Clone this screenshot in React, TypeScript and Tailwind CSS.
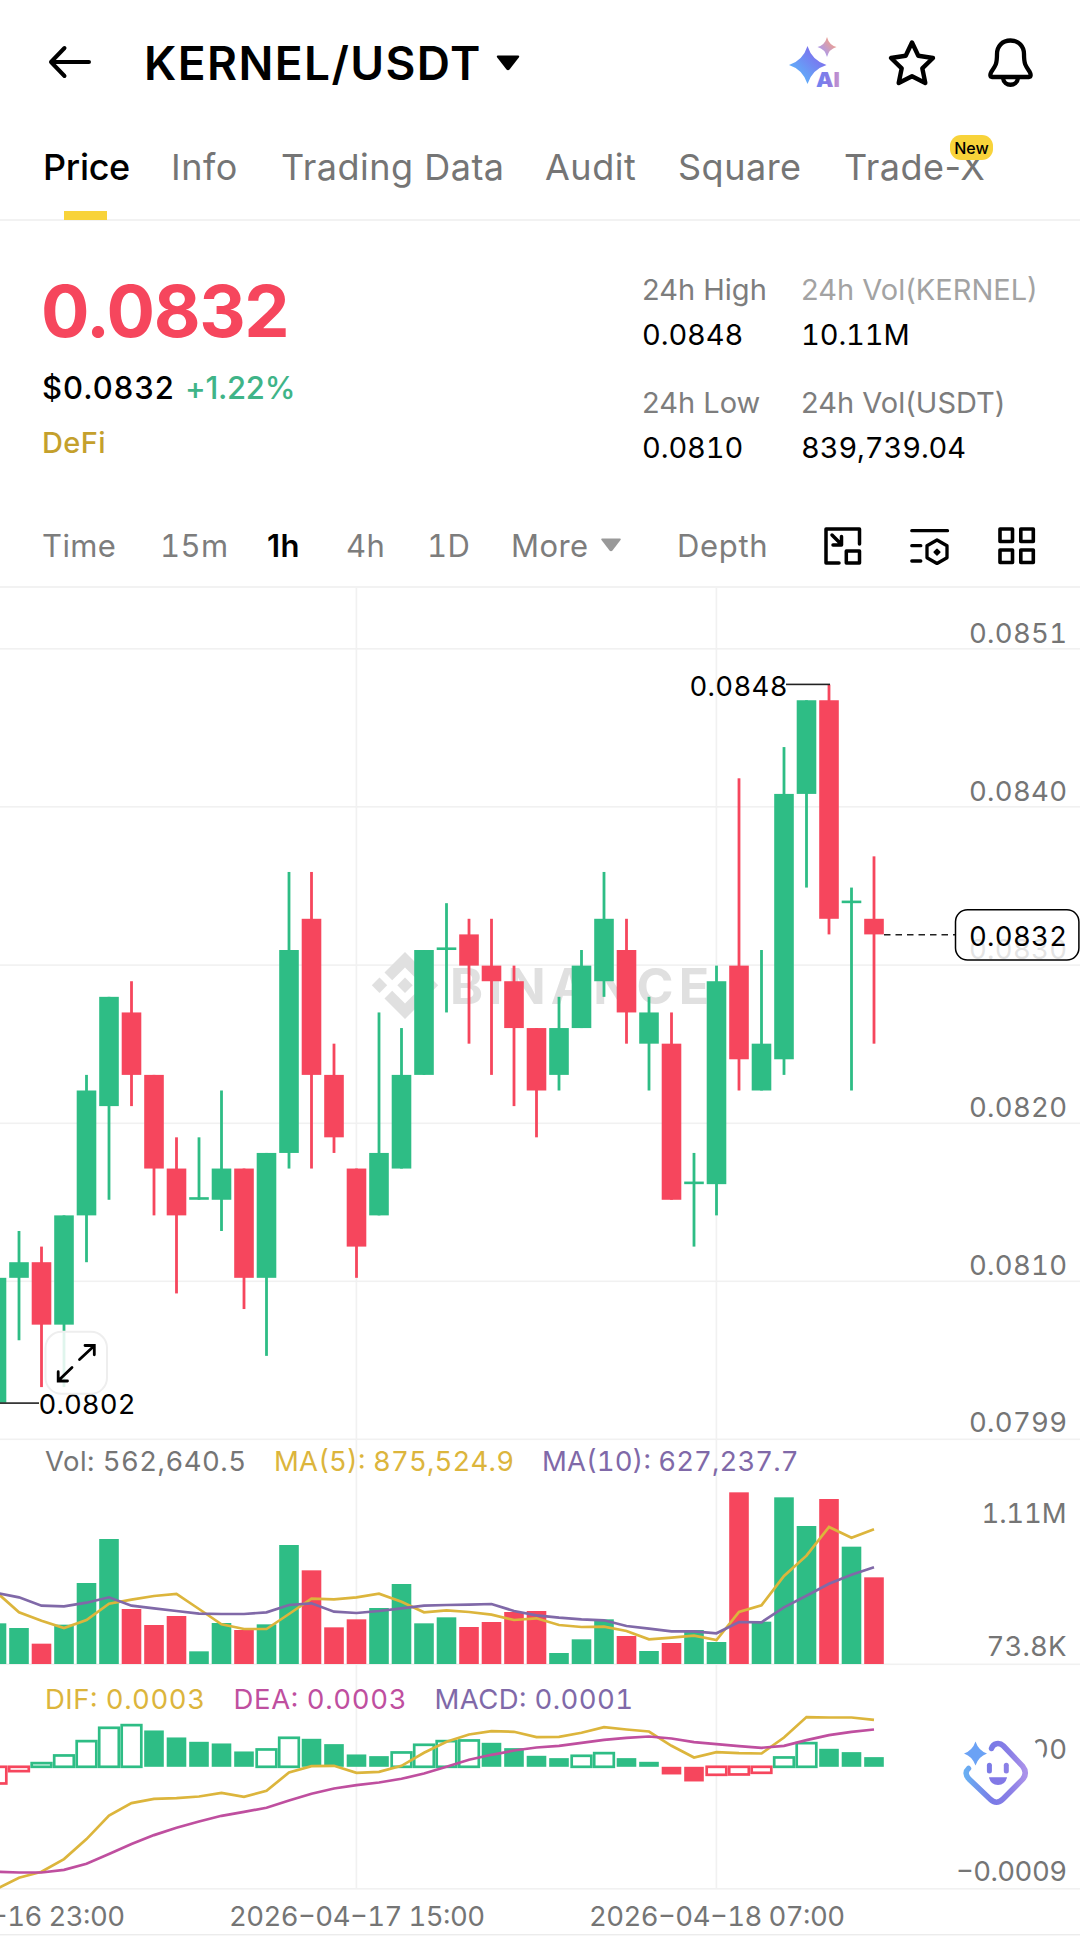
import { useState } from "react";

const UP = "#2ebd85";
const DOWN = "#f6465d";
const YELLOW = "#dcb53c";
const PURPLE = "#8069a8";
const PINK = "#bf4f9f";
const GRID = "#f1f1f1";

const STEP = 22.5;
const BODY = 19.6;

// [up, high, body top, body bottom, low] in units of 0.0001
const candles: [number, number, number, number, number][] = [
  [1, 810, 810, 802, 802],
  [1, 813, 811, 810, 806],
  [0, 812, 811, 807, 803],
  [1, 814, 814, 807, 803],
  [1, 823, 822, 814, 811],
  [1, 828, 828, 821, 815],
  [0, 829, 827, 823, 821],
  [0, 823, 823, 817, 814],
  [0, 819, 817, 814, 809],
  [1, 819, 815, 815, 815],
  [1, 822, 817, 815, 813],
  [0, 817, 817, 810, 808],
  [1, 818, 818, 810, 805],
  [1, 836, 831, 818, 817],
  [0, 836, 833, 823, 817],
  [0, 825, 823, 819, 818],
  [0, 817, 817, 812, 810],
  [1, 827, 818, 814, 814],
  [1, 826, 823, 817, 817],
  [1, 831, 831, 823, 823],
  [1, 834, 831, 831, 827],
  [0, 833, 832, 830, 825],
  [0, 833, 830, 829, 823],
  [0, 830, 829, 826, 821],
  [0, 826, 826, 822, 819],
  [1, 828, 826, 823, 822],
  [1, 831, 830, 826, 826],
  [1, 836, 833, 829, 828],
  [0, 833, 831, 827, 825],
  [1, 828, 827, 825, 822],
  [0, 827, 825, 815, 815],
  [1, 818, 816, 816, 812],
  [1, 830, 829, 816, 814],
  [0, 842, 830, 824, 822],
  [1, 831, 825, 822, 822],
  [1, 844, 841, 824, 823],
  [1, 847, 847, 841, 835],
  [0, 848, 847, 833, 832],
  [1, 835, 834, 834, 822],
  [0, 837, 833, 832, 825],
];

// heights in thirds of a pixel
const volumes = [
  122, 108, 61, 118, 243, 375, 165, 117, 144, 38, 123, 102, 119, 357, 281, 110, 134, 168, 240, 122,
  140, 111, 126, 156, 159, 33, 74, 134, 84, 39, 63, 102, 66, 515, 127, 500, 414, 495, 352, 260,
];
const ma5 = [
  215, 155, 130, 108, 132, 181, 193, 204, 210, 165, 119, 105, 105, 150, 196, 194, 200, 211, 187, 155,
  161, 156, 148, 132, 137, 117, 111, 112, 99, 74, 79, 85, 72, 156, 176, 264, 325, 411, 379, 404,
];
const ma10 = [
  213, 200, 175, 173, 184, 200, 175, 167, 159, 151, 150, 150, 155, 177, 182, 157, 153, 159, 167, 175,
  177, 178, 180, 159, 146, 139, 134, 131, 114, 106, 98, 98, 92, 126, 125, 170, 205, 241, 268, 290,
];

// [value, hollow]
const macd: [number, number][] = [
  [-50, 1], [-13, 1], [11, 1], [34, 1], [77, 1], [117, 1], [125, 1], [109, 0], [88, 0], [75, 0],
  [70, 0], [46, 0], [52, 1], [87, 1], [84, 0], [68, 0], [37, 0], [32, 0], [43, 1], [66, 1],
  [77, 1], [79, 1], [72, 0], [56, 0], [33, 0], [26, 0], [33, 1], [41, 1], [26, 0], [15, 0],
  [-23, 0], [-44, 0], [-24, 1], [-23, 1], [-18, 1], [28, 1], [71, 1], [54, 0], [44, 0], [29, 0],
];
const dif = [
  -367, -333, -315, -277, -217, -146, -109, -96, -94, -89, -78, -90, -72, -17, 2, 3, -18, -15, 3, 42,
  75, 97, 107, 105, 89, 90, 102, 119, 112, 106, 63, 28, 44, 41, 40, 88, 149, 148, 148, 141,
];
const dea = [
  -315, -317, -317, -309, -291, -262, -232, -205, -183, -164, -147, -135, -123, -101, -81, -65, -55, -47, -36, -20,
  0, 21, 36, 49, 58, 63, 72, 81, 87, 91, 85, 74, 68, 62, 57, 63, 80, 95, 105, 112,
];

const xAt = (i: number) => -3.5 + i * STEP;
const yAt = (p: number) => 934.4 - (p - 832) * 15.61;
const line = (values: number[], base: number) =>
  values.map((v, i) => `${xAt(i)},${(base - v / 3).toFixed(1)}`).join(" ");

type LabelProps = {
  x: number;
  y: number;
  w: number;
  children: string;
  fill?: string;
};

function Label({ x, y, w, children, fill = "#757575" }: LabelProps) {
  return (
    <text x={x - 1} y={y + 0.5} textLength={w + 3} fill={fill} fontSize="27.5" className="tabular-nums">
      {children}
    </text>
  );
}

function Candles() {
  return (
    <g>
      {candles.map(([up, high, top, bottom, low], i) => {
        const fill = up ? UP : DOWN;
        const flat = top === bottom;
        return (
          <g key={i} fill={fill}>
            <rect x={xAt(i) - 1.4} y={yAt(high)} width="2.8" height={yAt(low) - yAt(high)} />
            <rect
              x={xAt(i) - BODY / 2}
              y={flat ? yAt(top) - 2.6 : yAt(top)}
              width={BODY}
              height={flat ? 2.6 : yAt(bottom) - yAt(top)}
            />
          </g>
        );
      })}
    </g>
  );
}

function Chart() {
  return (
    <svg viewBox="0 588 1080 1366" width="1080" height="1366" className="block">
      <defs>
        <linearGradient id="bot" x1="0" y1="0" x2="1" y2="0">
          <stop offset="0" stopColor="#69aef2" />
          <stop offset="0.45" stopColor="#7b7ae6" />
          <stop offset="0.75" stopColor="#8a7fe6" />
          <stop offset="1" stopColor="#ab92ea" />
        </linearGradient>
      </defs>

      {/* grid */}
      <g fill={GRID}>
        {[648, 806, 964.3, 1122.5, 1280.5, 1438.5, 1663.5, 1888].map((y) => (
          <rect key={y} x="0" y={y} width="1080" height="1.6" />
        ))}
        <rect x="355.6" y="588" width="1.6" height="1300" />
        <rect x="715.6" y="588" width="1.6" height="1300" />
        <rect x="0" y="1934" width="1080" height="1.4" fill="#ececec" />
      </g>

      {/* watermark */}
      <g fill="#e0e0e0">
        <path d="M405 952l20.5 20.5-7.7 7.7-12.8-12.8-12.8 12.8-7.7-7.7z" />
        <path d="M405 1019l20.5-20.5-7.7-7.7-12.8 12.8-12.8-12.8-7.7 7.7z" />
        <path d="M405 977.6l7.7 7.7-7.7 7.7-7.7-7.7z" />
        <path d="M379.5 977.6l7.7 7.7-7.7 7.7-7.7-7.7z" />
        <path d="M430.5 977.6l7.7 7.7-7.7 7.7-7.7-7.7z" />
        <text x="450" y="1003.5" fontSize="50" fontWeight="700" textLength="259">
          BINANCE
        </text>
      </g>

      <Candles />

      <rect x="786" y="683.6" width="44" height="1.6" fill="#222" />
      <Label x={690.5} y={695} w={95} fill="#000">0.0848</Label>
      <rect x="0" y="1402.3" width="39" height="1.6" fill="#222" />
      <Label x={39.5} y={1413.7} w={94} fill="#000">0.0802</Label>

      {/* price axis */}
      <Label x={970} y={642.4} w={95}>0.0851</Label>
      <Label x={970} y={800.4} w={95}>0.0840</Label>
      <Label x={970} y={958.4} w={95}>0.0830</Label>
      <Label x={970} y={1116.6} w={95}>0.0820</Label>
      <Label x={970} y={1274.6} w={95}>0.0810</Label>
      <Label x={970} y={1431} w={95}>0.0799</Label>
      <line x1="884" y1="934.7" x2="955" y2="934.7" stroke="#222" strokeWidth="1.6" strokeDasharray="6.5 5" />
      <rect x="955.5" y="909.8" width="123.4" height="50.2" rx="12" fill="#fff" fillOpacity="0.8" stroke="#000" strokeWidth="1.5" />
      <Label x={970} y={945.4} w={95} fill="#000">0.0832</Label>

      {/* volume */}
      <Label x={46} y={1470} w={198}>Vol: 562,640.5</Label>
      <Label x={275} y={1470} w={237} fill={YELLOW}>MA(5): 875,524.9</Label>
      <Label x={543} y={1470} w={253.5} fill={PURPLE}>MA(10): 627,237.7</Label>
      {volumes.map((v, i) => (
        <rect
          key={i}
          x={xAt(i) - BODY / 2}
          y={1664 - v / 3}
          width={BODY}
          height={v / 3}
          fill={candles[i][0] ? UP : DOWN}
        />
      ))}
      <polyline points={line(ma5, 1664)} fill="none" stroke={YELLOW} strokeWidth="2.7" />
      <polyline points={line(ma10, 1664)} fill="none" stroke={PURPLE} strokeWidth="2.7" />
      <Label x={982.5} y={1522.7} w={82}>1.11M</Label>
      <Label x={987.5} y={1655.7} w={77}>73.8K</Label>

      {/* macd */}
      <Label x={46} y={1708.7} w={157} fill={YELLOW}>DIF: 0.0003</Label>
      <Label x={234.5} y={1708.7} w={170} fill={PINK}>DEA: 0.0003</Label>
      <Label x={435.5} y={1708.7} w={195.5} fill={PURPLE}>MACD: 0.0001</Label>
      {macd.map(([v, hollow], i) => {
        const color = v > 0 ? UP : DOWN;
        const h = Math.abs(v) / 3;
        return (
          <rect
            key={i}
            x={xAt(i) - BODY / 2}
            y={v > 0 ? 1766.8 - h : 1766.8}
            width={BODY}
            height={h}
            fill={hollow ? "#fff" : color}
            stroke={hollow ? color : "none"}
            strokeWidth="2.7"
          />
        );
      })}
      <polyline points={line(dif, 1766.8)} fill="none" stroke={YELLOW} strokeWidth="2.7" />
      <polyline points={line(dea, 1766.8)} fill="none" stroke={PINK} strokeWidth="2.7" />
      <Label x={970} y={1758} w={95}>0.0000</Label>
      <Label x={957} y={1880.7} w={108}>−0.0009</Label>

      {/* dates */}
      <Label x={-130} y={1925.7} w={253}>2026−04−16 23:00</Label>
      <Label x={230} y={1925.7} w={253}>2026−04−17 15:00</Label>
      <Label x={590} y={1925.7} w={253}>2026−04−18 07:00</Label>

      {/* fullscreen button */}
      <rect x="45.5" y="1331.8" width="61.5" height="62" rx="16" fill="#fff" fillOpacity="0.85" stroke="#eee" strokeWidth="2" />
      <path
        d="M79.5 1359.5L94 1346M85 1345.5h9.3v9.3M72 1367.5L58.5 1380.5M67.5 1381h-9.3v-9.3"
        fill="none"
        stroke="#000"
        strokeWidth="2.8"
        strokeLinecap="round"
      />

      {/* assistant */}
      <circle cx="996" cy="1773" r="50" fill="#fff" />
      <path
        d="M991.5 1748.5C993 1743 999.5 1742 1003.5 1746L1022.5 1766Q1028 1773 1022.5 1779.500L1003 1799Q996.5 1805.500 990 1799L969 1779Q963.500 1773 968.500 1768.500"
        fill="none"
        stroke="url(#bot)"
        strokeWidth="5.5"
        strokeLinecap="round"
      />
      <path d="M975.5 1741.500Q978.500 1750.500 987 1753.500Q978.500 1756.500 975.5 1765.500Q972.500 1756.500 964 1753.500Q972.500 1750.500 975.5 1741.500Z" fill="#6ba2f5" />
      <rect x="986.9" y="1762.7" width="5" height="10.8" rx="2.5" fill="#7b7ae6" />
      <rect x="1003.8" y="1762.7" width="5" height="10.8" rx="2.5" fill="#8a7fe6" />
      <path d="M989 1777.3h18q-1.5 7.700-9 7.700t-9-7.700z" fill="#8278e6" />
    </svg>
  );
}

function Header() {
  return (
    <header className="flex h-[126px] items-center pl-[48px]">
      <svg width="44" height="34" viewBox="0 0 44 34" fill="none" stroke="#000" strokeWidth="4" strokeLinecap="round" strokeLinejoin="round" className="mt-[-3px]">
        <path d="M41 17H3M16.5 3L3 17l13.5 14" />
      </svg>
      <h1 className="ml-[52px] w-[346px] text-[46px] font-semibold tracking-[1.4px] whitespace-nowrap">KERNEL/USDT</h1>
      <svg width="26" height="18" viewBox="0 0 26 18" className="ml-[5px]">
        <path d="M3 1.5h20q2 0 .8 2L14.500 15.500q-1.500 1.500-3 0L2.200 3.500q-1.200-2 .8-2z" />
      </svg>
      <svg width="54" height="54" viewBox="0 0 54 54" className="ml-[267px] overflow-visible">
        <defs>
          <linearGradient id="star" x1="0" y1="1" x2="1" y2="0">
            <stop offset="0.2" stopColor="#5fb0fa" />
            <stop offset="0.75" stopColor="#7b74ee" />
          </linearGradient>
          <linearGradient id="spark" x1="0" y1="1" x2="1" y2="0">
            <stop offset="0.2" stopColor="#a99af0" />
            <stop offset="0.8" stopColor="#f0a08c" />
          </linearGradient>
          <linearGradient id="ai" x1="0" y1="0" x2="1" y2="0">
            <stop offset="0" stopColor="#6d86f2" />
            <stop offset="0.5" stopColor="#8579e6" />
            <stop offset="1" stopColor="#cf96c8" />
          </linearGradient>
        </defs>
        <path d="M19.500 10Q24 24.500 38.500 29Q24 33.500 19.500 48Q15 33.500 1 29Q15 24.500 19.500 10Z" fill="url(#star)" />
        <path d="M39 1Q41 9 48.500 11Q41 13 39 21Q37 13 29.500 11Q37 9 39 1Z" fill="url(#spark)" />
        <text x="28" y="51" fontSize="19.5" fontWeight="900" textLength="24" lengthAdjust="spacingAndGlyphs" fill="url(#ai)" stroke="#fff" strokeWidth="3" paintOrder="stroke">
          AI
        </text>
      </svg>
      <svg width="50" height="50" viewBox="0 0 50 50" fill="none" stroke="#000" strokeWidth="4.4" strokeLinejoin="round" className="ml-[45px]">
        <path d="M25 4.500l6.300 13.300 14.700 2.200-10.700 10.300 3 14.700L25 38.300 11.700 45l3-14.700L4 20l14.700-2.200z" />
      </svg>
      <svg width="48" height="52" viewBox="0 0 48 52" fill="none" stroke="#000" strokeWidth="4.3" strokeLinejoin="round" className="ml-[50px]">
        <path d="M23.500 3.500C15 3.500 10 9.500 10 17C10 27 8.500 29 4.500 34.500C2.800 37.500 3 40 5 40H42C44 40 44.200 37.500 42.500 34.500C38.500 29 37 27 37 17C37 9.500 32 3.500 23.500 3.500Z" />
        <path d="M16 41C17 50 30 50 31 41" />
      </svg>
    </header>
  );
}

const tabs = [
  { name: "Price", className: "w-[128px]" },
  { name: "Info", className: "w-[110px]" },
  { name: "Trading Data", className: "w-[264px]" },
  { name: "Audit", className: "w-[133px]" },
  { name: "Square", className: "w-[166px]" },
  { name: "Trade-X", className: "w-[150px]" },
];

function Tabs() {
  const [active, setActive] = useState("Price");
  return (
    <nav className="flex h-[95px] border-b-2 border-[#f2f2f2] pl-[43px] text-[36px] leading-[82px]">
      {tabs.map((tab) => (
        <button
          key={tab.name}
          onClick={() => setActive(tab.name)}
          className={`relative flex h-[94px] flex-col items-start whitespace-nowrap ${tab.className} ${
            active === tab.name ? "font-medium tracking-[-0.3px] text-black" : "tracking-[0.5px] text-[#757575]"
          }`}
        >
          <span className="h-[85px]">{tab.name}</span>
          {active === tab.name && <span className="ml-[21px] h-[9px] w-[43px] bg-[#f8d33a]" />}
          {tab.name === "Trade-X" && (
            <span className="absolute top-[9px] left-[106px] flex h-[25px] w-[43px] items-center justify-center rounded-[11px] bg-[#f8d33a] text-[16px] leading-none font-medium tracking-normal text-black">
              New
            </span>
          )}
        </button>
      ))}
    </nav>
  );
}

function Stat({ label, value, light }: { label: string; value: string; light?: boolean }) {
  return (
    <div className="h-[113px] text-[29px] leading-[45px] whitespace-nowrap">
      <div className={light ? "text-[#a3a3a3]" : "text-[#7d7d7d]"}>{label}</div>
      <div className="tracking-[-0.1px] text-black tabular-nums">{value}</div>
    </div>
  );
}

function Summary() {
  return (
    <section className="flex h-[283px]">
      <div className="w-[642px] pt-[50px] pl-[41px]">
        <div className="text-[72px] leading-[80px] font-bold tracking-[-1.4px] text-[#f6465d]">0.0832</div>
        <div className="flex pl-[1px] text-[31px] leading-[74px] font-medium">
          <span className="w-[143px] tracking-[1px] text-black">$0.0832</span>
          <span className="tracking-[-0.3px] text-[#3fb488]">+1.22%</span>
        </div>
        <div className="pt-[1px] pl-[1px] text-[29px] leading-[34px] font-medium tracking-[0.4px] text-[#c4a02c]">DeFi</div>
      </div>
      <div className="grid grid-cols-[159px_240px] content-start pt-[46px]">
        <Stat label="24h High" value="0.0848" />
        <Stat label="24h Vol(KERNEL)" value="10.11M" light />
        <Stat label="24h Low" value="0.0810" />
        <Stat label="24h Vol(USDT)" value="839,739.04" />
      </div>
    </section>
  );
}

const intervals = [
  { name: "Time", className: "w-[118px]" },
  { name: "15m", className: "w-[107px]" },
  { name: "1h", className: "w-[79px]" },
  { name: "4h", className: "w-[81px]" },
  { name: "1D", className: "w-[84px]" },
  { name: "More", className: "w-[88px]" },
];

function IntervalBar() {
  const [active, setActive] = useState("1h");
  return (
    <div className="flex h-[84px] items-center border-b-2 border-[#f2f2f2] pt-[2px] pl-[42px] text-[31px] tracking-[0.4px] text-[#7d7d7d]">
      {intervals.map((item) => (
        <button
          key={item.name}
          onClick={() => setActive(item.name)}
          className={`text-left ${item.className} ${
            active === item.name ? "font-semibold text-black" : "tabular-nums"
          }`}
        >
          {item.name}
        </button>
      ))}
      <svg width="22" height="14" viewBox="0 0 22 14" fill="#999" className="mt-[-2px] mr-[55px] ml-[1px]">
        <path d="M2 .5h18q1.500 0 .5 1.500l-8 10.500q-1.500 1.500-3 0L1.500 2Q.5.5 2 .5z" />
      </svg>
      <button className="w-[147px] text-left tracking-[0.7px]">Depth</button>
      <svg width="38" height="38" viewBox="0 0 38 38" fill="none" stroke="#000" strokeWidth="3.5" strokeLinecap="round" strokeLinejoin="round">
        <path d="M15 36H2V2h33.500v15" />
        <path d="M22.300 24H35.500v12H22.300z" />
        <path d="M8 8l9.500 9.500M17.500 9.500v8.500H9" />
      </svg>
      <svg width="40" height="38" viewBox="0 0 40 38" fill="none" stroke="#000" strokeWidth="3.3" strokeLinecap="round" strokeLinejoin="round" className="ml-[48px]">
        <path d="M1.800 3.700H37.500M1.800 18.700h9M1.800 34h9" />
        <path d="M27 13l10 5.700v12L27 36.500l-10-5.800v-12z" />
        <path d="M27 22.300l2.800 2.800-2.800 2.800-2.800-2.800z" fill="#000" strokeWidth="1.5" />
      </svg>
      <svg width="38" height="38" viewBox="0 0 38 38" fill="none" stroke="#000" strokeWidth="3.6" strokeLinejoin="round" className="ml-[48px]">
        <path d="M2 2h12.500v12.500H2zM22.800 2h12.500v12.500H22.800zM2 23h12.500v12.500H2zM22.800 23h12.500v12.500H22.800z" />
      </svg>
    </div>
  );
}

export default function App() {
  return (
    <div className="w-[1080px] overflow-hidden bg-white font-['Inter','Liberation_Sans',sans-serif]">
      <Header />
      <Tabs />
      <Summary />
      <IntervalBar />
      <Chart />
    </div>
  );
}
